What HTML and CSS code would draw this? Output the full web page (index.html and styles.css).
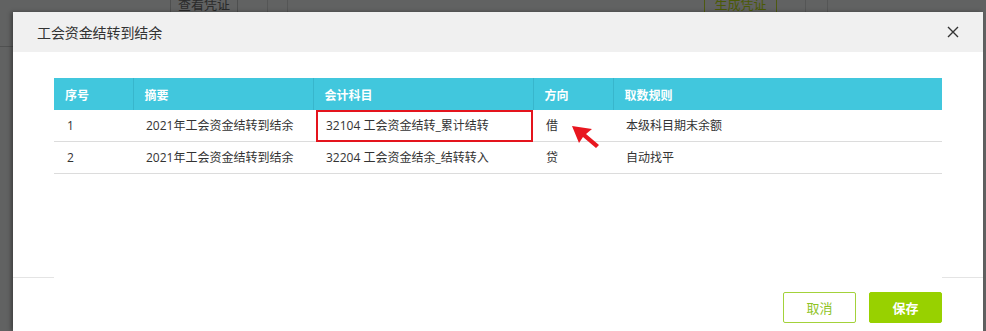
FILE: index.html
```html
<!DOCTYPE html>
<html lang="zh-CN">
<head>
<meta charset="utf-8">
<title>工会资金结转到结余</title>
<link rel="stylesheet" href="styles.css">
</head>
<body>
<div class="page">
  <div class="toolbar">
    <div class="tb-gap1"></div>
    <div class="tb-btn">查看凭证</div>
    <div class="tb-sep w30"></div>
    <div class="tb-sep w20"></div>
    <div class="tb-fill"></div>
    <div class="tb-btn green">生成凭证</div>
    <div class="tb-sep w29"></div>
    <div class="tb-sep w22"></div>
    <div class="tb-rest"></div>
  </div>
  <div class="left-rule"></div>

  <div class="modal">
    <div class="modal-head">
      <span class="modal-title">工会资金结转到结余</span>
      <svg class="close" width="12" height="12" viewBox="0 0 12 12"><path d="M1 1 L11 11 M11 1 L1 11" stroke="#333" stroke-width="1.4" fill="none"/></svg>
    </div>
    <div class="modal-body">
      <table class="grid">
        <colgroup>
          <col class="c1"><col class="c2"><col class="c3"><col class="c4"><col class="c5">
        </colgroup>
        <thead>
          <tr><th>序号</th><th>摘要</th><th>会计科目</th><th>方向</th><th>取数规则</th></tr>
        </thead>
        <tbody>
          <tr><td>1</td><td>2021年工会资金结转到结余</td><td class="marked">32104 工会资金结转_累计结转</td><td class="dir">借<svg class="arrow" width="34" height="28" viewBox="0 0 34 28"><polygon points="1,1 21,4 15,9 28,20 25,23 12,12 8,18" fill="#e8161f"/></svg></td><td>本级科目期末余额</td></tr>
          <tr><td>2</td><td>2021年工会资金结转到结余</td><td>32204 工会资金结余_结转转入</td><td>贷</td><td>自动找平</td></tr>
        </tbody>
      </table>
    </div>
    <div class="modal-foot">
      <button class="btn ghost">取消</button>
      <button class="btn solid">保存</button>
    </div>
  </div>
</div>
</body>
</html>
```
FILE: styles.css
```css
* { box-sizing: border-box; }
html, body { margin: 0; padding: 0; }
body {
  background: #616262;
  font-family: "Open Sans", "Noto Sans CJK SC", sans-serif;
  font-size: 12px;
  color: #333;
  overflow: hidden;
  width: 986px;
  height: 331px;
}
.page { position: relative; width: 986px; height: 331px; overflow: hidden; }

.toolbar {
  display: flex;
  height: 48px;
  color: #2a2a2a;
  font-family: "Noto Sans CJK SC", sans-serif;
}
.tb-gap1 { width: 170px; }
.tb-btn {
  width: 68px;
  border-left: 1px solid #4e4f4f;
  border-right: 1px solid #4e4f4f;
  text-align: center;
  font-size: 13px;
  line-height: 18px;
  padding-top: 1px;
  margin-top: -6px;
  height: 54px;
}
.tb-btn.green { width: 73px; color: #4b5a06; border-color: #4e5a10; }
.tb-sep { border-right: 1px solid #555656; }
.w30 { width: 30px; }
.w20 { width: 20px; }
.w29 { width: 29px; }
.w22 { width: 22px; }
.tb-fill { width: 416px; }
.tb-rest { flex: 1; }
.left-rule {
  position: absolute;
  left: 0; top: 46px;
  width: 14px; height: 1px;
  background: #505151;
}

.modal {
  position: absolute;
  left: 13px; top: 12px;
  width: 970px;
  height: 319px;
  background: #fff;
  box-shadow: -2px 0 4px rgba(0,0,0,0.35);
  display: flex;
  flex-direction: column;
}
.modal-head {
  height: 40px;
  flex: none;
  background: #f0f0f0;
  display: flex;
  align-items: center;
  justify-content: space-between;
  padding: 0 24px 0 24px;
}
.modal-title {
  font-family: "Noto Sans CJK SC", sans-serif;
  font-size: 14px;
  color: #333;
  letter-spacing: -0.1px;
}

.modal-body {
  height: 225px;
  flex: none;
  padding: 26px 41px 0 41px;
}
.grid {
  width: 888px;
  border-collapse: collapse;
  table-layout: fixed;
}
.c1 { width: 79px; }
.c2 { width: 180px; }
.c3 { width: 220px; }
.c4 { width: 80px; }
.c5 { width: 329px; }
.grid th {
  background: #41c7dd;
  color: #fff;
  font-family: "Noto Sans CJK SC", sans-serif;
  font-weight: bold;
  font-size: 12px;
  text-align: left;
  height: 32px;
  padding: 0 0 0 11px;
  border-left: 1px solid #38b6cc;
}
.grid th:first-child { border-left: none; }
.grid td {
  height: 31px;
  padding: 0 0 0 13px;
  border-bottom: 1px solid #dcdcdc;
  white-space: nowrap;
  color: #333;
}
.grid tbody tr:last-child td { height: 32px; }
.grid td.marked, .grid td.dir { position: relative; }
.grid td.marked::after {
  content: "";
  position: absolute;
  left: 3px; right: 0; top: 0; bottom: -1px;
  border: 2px solid #e4141d;
}
.arrow {
  position: absolute;
  left: 38px;
  top: 15px;
}

.modal-foot {
  flex: 1;
  display: flex;
  justify-content: flex-end;
  gap: 13px;
  padding: 15px 41px 0 0;
  background:
    linear-gradient(#e4e4e4, #e4e4e4) left top / 41px 1px no-repeat,
    linear-gradient(#e4e4e4, #e4e4e4) right top / 41px 1px no-repeat,
    #fff;
}
.btn {
  width: 73px;
  height: 31px;
  border-radius: 2px;
  font-family: "Noto Sans CJK SC", sans-serif;
  font-size: 13px;
  cursor: pointer;
  padding: 0;
}
.btn.ghost {
  background: #fff;
  border: 1px solid #a3d23a;
  color: #8fc31f;
}
.btn.solid {
  background: #98d100;
  border: 1px solid #98d100;
  color: #fff;
  font-weight: bold;
}
```
